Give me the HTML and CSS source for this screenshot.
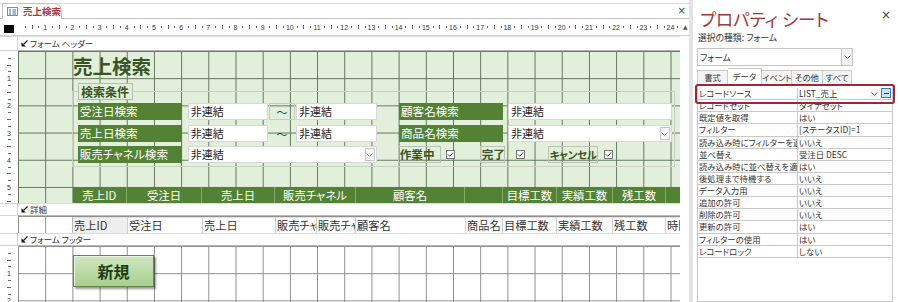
FILE: index.html
```html
<!DOCTYPE html>
<html lang="ja">
<head>
<meta charset="utf-8">
<title>売上検索</title>
<link rel="stylesheet" href="styles.css">
</head>
<body>
<div class="app">
  <div class="doc">
    <div class="tabstrip">
      <div class="tab">
        <svg class="tab-icon" width="11" height="9" viewBox="0 0 11 9"><rect x="0.5" y="0.5" width="10" height="8" fill="#fff" stroke="#8a8a8a"/><path d="M2 3h2M2 5h2M2 7h2M5.5 3h3.5M5.5 5h3.5M5.5 7h3.5" stroke="#3d70b8" stroke-width="1"/></svg>
        <span>売上検索</span>
      </div>
      <span class="doc-close">×</span>
    </div>

    <div class="ruler-row">
      <div class="corner"><i></i></div>
      <div class="hruler">
        <span><b>1</b></span><span><b>2</b></span><span><b>3</b></span><span><b>4</b></span><span><b>5</b></span><span><b>6</b></span><span><b>7</b></span><span><b>8</b></span><span><b>9</b></span><span><b>10</b></span><span><b>11</b></span><span><b>12</b></span><span><b>13</b></span><span><b>14</b></span><span><b>15</b></span><span><b>16</b></span><span><b>17</b></span><span><b>18</b></span><span><b>19</b></span><span><b>20</b></span><span><b>21</b></span><span><b>22</b></span><span><b>23</b></span><span><b>24</b></span><span class="rest"></span>
      </div>
      <div class="scroll-up">▲</div>
    </div>

    <!-- form header bar -->
    <div class="sec bar">
      <div class="vr selbox"></div>
      <div class="surf secbar"><svg width="7" height="7" viewBox="0 0 7 7"><path d="M0.5 6.5V2.2L4.8 6.5Z" fill="#111"/><path d="M2.6 4.4L6.5 0.5" stroke="#111" stroke-width="1.3"/></svg><span>フォーム ヘッダー</span></div>
    </div>

    <!-- form header -->
    <div class="sec header-sec">
      <div class="vr vcells">
        <span><b>1</b></span><span><b>2</b></span><span><b>3</b></span><span><b>4</b></span><span><b>5</b></span><span class="rest"></span>
      </div>
      <div class="surf grid-green header">
        <div class="form-title">売上検索</div>
        <div class="group">
          <div class="legend">検索条件</div>
          <div class="frow r1">
            <span class="lbl w104">受注日検索</span>
            <span class="tb w80 ml6">非連結</span>
            <span class="tilde boxed">〜</span>
            <span class="tb w81 ml1">非連結</span>
            <span class="lbl w104 ml22">顧客名検索</span>
            <span class="tb w164 ml5">非連結</span>
          </div>
          <div class="frow r2">
            <span class="lbl w104">売上日検索</span>
            <span class="tb w80 ml6">非連結</span>
            <span class="tilde">〜</span>
            <span class="tb w81 ml1">非連結</span>
            <span class="lbl w104 ml22">商品名検索</span>
            <span class="tb w164 ml5 combo-tb">非連結<i class="dd"><svg width="7" height="4" viewBox="0 0 7 4"><path d="M0.5 0.5L3.5 3.5L6.5 0.5" fill="none" stroke="#8a8a8a"/></svg></i></span>
          </div>
          <div class="frow r3">
            <span class="lbl w104">販売チャネル検索</span>
            <span class="tb w189 ml6 combo-tb">非連結<i class="dd"><svg width="7" height="4" viewBox="0 0 7 4"><path d="M0.5 0.5L3.5 3.5L6.5 0.5" fill="none" stroke="#8a8a8a"/></svg></i></span>
            <span class="plbl w43 ml21">作業中</span>
            <span class="cb ml5"><svg width="9" height="9" viewBox="0 0 9 9"><rect x="0.5" y="0.5" width="8" height="8" fill="#fff" stroke="#777"/><path d="M2 4.5L3.8 6.3L7 2.6" fill="none" stroke="#333" stroke-width="1"/></svg></span>
            <span class="plbl w25 ml25">完了</span>
            <span class="cb ml11"><svg width="9" height="9" viewBox="0 0 9 9"><rect x="0.5" y="0.5" width="8" height="8" fill="#fff" stroke="#777"/><path d="M2 4.5L3.8 6.3L7 2.6" fill="none" stroke="#333" stroke-width="1"/></svg></span>
            <span class="plbl w50 ml23 narrow">キャンセル</span>
            <span class="cb ml6"><svg width="9" height="9" viewBox="0 0 9 9"><rect x="0.5" y="0.5" width="8" height="8" fill="#fff" stroke="#777"/><path d="M2 4.5L3.8 6.3L7 2.6" fill="none" stroke="#333" stroke-width="1"/></svg></span>
          </div>
        </div>
        <div class="colband">
          <span class="c1">売上ID</span><span class="c2">受注日</span><span class="c3">売上日</span><span class="c4">販売チャネル</span><span class="c5">顧客名</span><span class="c6"></span><span class="c7">目標工数</span><span class="c8">実績工数</span><span class="c9">残工数</span><span class="c10"></span>
        </div>
      </div>
    </div>

    <!-- detail bar -->
    <div class="sec bar small">
      <div class="vr selbox"></div>
      <div class="surf secbar"><svg width="7" height="7" viewBox="0 0 7 7"><path d="M0.5 6.5V2.2L4.8 6.5Z" fill="#111"/><path d="M2.6 4.4L6.5 0.5" stroke="#111" stroke-width="1.3"/></svg><span>詳細</span></div>
    </div>

    <!-- detail -->
    <div class="sec detail-sec">
      <div class="vr vcells detail-vr"></div>
      <div class="surf grid-gray detail">
        <div class="drow">
          <span class="d1 first">売上ID</span><span class="d2">受注日</span><span class="d3">売上日</span><span class="d4">販売チャネル</span><span class="d5">販売チャネル</span><span class="d6">顧客名</span><span class="d7">商品名</span><span class="d8">目標工数</span><span class="d9">実績工数</span><span class="d10">残工数</span><span class="d11">時間</span>
        </div>
      </div>
    </div>

    <!-- footer bar -->
    <div class="sec bar small">
      <div class="vr selbox"></div>
      <div class="surf secbar"><svg width="7" height="7" viewBox="0 0 7 7"><path d="M0.5 6.5V2.2L4.8 6.5Z" fill="#111"/><path d="M2.6 4.4L6.5 0.5" stroke="#111" stroke-width="1.3"/></svg><span>フォーム フッター</span></div>
    </div>

    <!-- footer -->
    <div class="sec footer-sec">
      <div class="vr vcells">
        <span><b>1</b></span><span><b>2</b></span>
      </div>
      <div class="surf grid-gray footer">
        <div class="newbtn">新規</div>
      </div>
    </div>
  </div>

  <div class="splitter"></div>

  <div class="props">
    <div class="props-head">
      <span class="props-title">プロパティ シート</span>
      <span class="props-close">×</span>
    </div>
    <div class="sel-kind">選択の種類: フォーム</div>
    <div class="pcombo"><span>フォーム</span><i class="pdd"><svg width="7" height="4" viewBox="0 0 7 4"><path d="M0.5 0.5L3.5 3.5L6.5 0.5" fill="none" stroke="#777"/></svg></i></div>
    <div class="ptabs">
      <span class="t1">書式</span><span class="t2 on">データ</span><span class="t3">イベント</span><span class="t4">その他</span><span class="t5">すべて</span>
    </div>
    <div class="pgrid">
      <div class="prow"><span class="pk">レコードソース</span><span class="pv">LIST_売上<i class="vdd"><svg width="7" height="4" viewBox="0 0 7 4"><path d="M0.5 0.5L3.5 3.5L6.5 0.5" fill="none" stroke="#555"/></svg></i><i class="build"></i></span></div>
      <div class="prow"><span class="pk">レコードセット</span><span class="pv">ダイナセット</span></div>
      <div class="prow"><span class="pk">既定値を取得</span><span class="pv">はい</span></div>
      <div class="prow"><span class="pk">フィルター</span><span class="pv">[ステータスID]=1</span></div>
      <div class="prow"><span class="pk">読み込み時にフィルターを適用</span><span class="pv">いいえ</span></div>
      <div class="prow"><span class="pk">並べ替え</span><span class="pv">受注日 DESC</span></div>
      <div class="prow"><span class="pk">読み込み時に並べ替えを適用</span><span class="pv">はい</span></div>
      <div class="prow"><span class="pk">後処理まで待機する</span><span class="pv">いいえ</span></div>
      <div class="prow"><span class="pk">データ入力用</span><span class="pv">いいえ</span></div>
      <div class="prow"><span class="pk">追加の許可</span><span class="pv">いいえ</span></div>
      <div class="prow"><span class="pk">削除の許可</span><span class="pv">いいえ</span></div>
      <div class="prow"><span class="pk">更新の許可</span><span class="pv">はい</span></div>
      <div class="prow"><span class="pk">フィルターの使用</span><span class="pv">はい</span></div>
      <div class="prow"><span class="pk">レコードロック</span><span class="pv">しない</span></div>
      <div class="focus-ring"></div>
    </div>
  </div>
</div>
</body>
</html>
```

FILE: styles.css
```css
* { box-sizing: border-box; }
html, body { margin: 0; padding: 0; }
body {
  width: 900px;
  height: 302px;
  overflow: hidden;
  background: #fff;
  font-family: "Noto Sans CJK JP", "Noto Sans", sans-serif;
  font-feature-settings: "palt";
  color: #222;
}
.app { display: flex; height: 302px; }

/* ---------- document area ---------- */
.doc { width: 689px; flex: none; display: flex; flex-direction: column; overflow: hidden; }

.tabstrip {
  flex: none;
  height: 16px;
  margin-top: 3px;
  border-top: 1px solid #dadada;
  border-bottom: 1px solid #c6c6c6;
  display: flex;
  justify-content: space-between;
}
.tab {
  width: 60px;
  margin: -1px 0 -1px 2px;
  border: 1px solid #c4c4c4;
  border-bottom: none;
  border-top-right-radius: 8px;
  background: #fff;
  display: flex;
  align-items: center;
  gap: 5px;
  padding-left: 4px;
  font-size: 9.5px;
  font-weight: bold;
  color: #b8312f;
  line-height: 1;
}
.tab-icon { flex: none; }
.doc-close {
  font-family: "DejaVu Sans", sans-serif;
  font-size: 10px;
  color: #444;
  line-height: 14px;
  margin-right: 3px;
}

.ruler-row { flex: none; height: 17px; display: flex; border-bottom: 1px solid #d2d2d2; }
.corner { width: 18px; flex: none; display: flex; justify-content: center; padding-top: 6px; }
.corner i { display: block; width: 10px; height: 8px; background: #000; }
.hruler {
  width: 662px; flex: none; display: flex; overflow: hidden;
  font-family: "Liberation Sans", sans-serif; font-size: 7px; color: #333;
}
.hruler span {
  flex: none; width: 27.2px; height: 100%;
  display: flex; justify-content: flex-end; align-items: center;
  background-image: linear-gradient(#666, #666), linear-gradient(#666, #666), linear-gradient(#666, #666);
  background-repeat: no-repeat;
  background-size: 1px 2px, 1px 4px, 1px 2px;
  background-position: 6.8px 7px, 13.6px 6px, 20.4px 7px;
}
.hruler span.rest { width: 10px; }
.hruler b { font-weight: normal; transform: translateX(50%); }
.scroll-up {
  width: 9px; flex: none; font-size: 6px; color: #555; line-height: 1;
  padding: 5px 0 0 3px; font-family: "DejaVu Sans", sans-serif;
}

.sec { display: flex; flex: none; }
.vr { width: 18px; flex: none; }
.surf { width: 662px; flex: none; position: relative; }

.bar { height: 15px; }
.bar.small { height: 13px; }
.selbox { border: 1px solid #d4d4d4; border-left: none; background: #fff; }
.secbar {
  border-top: 1px solid #dcdcdc;
  border-bottom: 1px solid #b9b9b9;
  display: flex; align-items: center; gap: 2px;
  padding-left: 3px;
  font-size: 8.5px; color: #333; line-height: 1;
}

/* vertical ruler */
.vcells { display: flex; flex-direction: column; font-family: "Liberation Sans", sans-serif; font-size: 7px; color: #333; }
.vcells span {
  flex: none; height: 27.2px; width: 18px;
  display: flex; flex-direction: column; justify-content: flex-end; align-items: center;
  background-image: linear-gradient(#666, #666), linear-gradient(#666, #666), linear-gradient(#666, #666);
  background-repeat: no-repeat;
  background-size: 3px 1px, 4px 1px, 3px 1px;
  background-position: 8px 6.8px, 7px 13.6px, 8px 20.4px;
}
.vcells span.rest { flex: 1; }
.vcells b { font-weight: normal; transform: translateY(50%); }

/* grids */
.grid-green {
  background-color: #e2efda;
  background-image: linear-gradient(to right, #62765a 1px, transparent 1px), linear-gradient(to bottom, #62765a 1px, transparent 1px);
  background-size: 27.2px 27.2px;
}
.grid-gray {
  background-color: #fff;
  background-image: linear-gradient(to right, #8e8e8e 1px, transparent 1px), linear-gradient(to bottom, #8e8e8e 1px, transparent 1px);
  background-size: 27.2px 27.2px;
}

/* header section */
.header-sec { height: 152px; }
.header { display: flex; flex-direction: column; height: 152px; }
.form-title {
  margin: 3px 0 0 55px; height: 24px; line-height: 24px;
  font-size: 19.5px; font-weight: bold; color: #375623;
  font-feature-settings: normal;
}
.group {
  margin: 13px 0 0 54px;
  width: 603px; height: 76px;
  border: 1px solid #c9d0c4;
}
.legend {
  margin: -9px 0 0 5px;
  width: 55px; height: 17px;
  border: 1px solid #b3bcad;
  background: #e2efda;
  color: #375623; font-weight: bold; font-size: 12px; line-height: 15px;
  padding-left: 2px;
  font-feature-settings: normal;
}
.frow { display: flex; align-items: center; height: 17px; margin-left: 4.7px; }
.r1 { margin-top: 3px; }
.r2 { margin-top: 5px; }
.r3 { margin-top: 4px; }
.lbl {
  height: 17px; line-height: 17px; padding-left: 2px;
  background: #548235; color: #fff; font-size: 11.6px;
  white-space: nowrap; overflow: hidden;
}
.tb {
  position: relative;
  height: 17px; line-height: 15px; padding-left: 2px;
  background: #fff; border: 1px solid #d8d8d8;
  font-size: 11px; color: #222; white-space: nowrap;
}
.dd {
  position: absolute; right: 1px; top: 1px;
  width: 10px; height: 13px;
  background: #f4f4f4; border: 1px solid #c6c6c6;
  display: flex; align-items: center; justify-content: center;
}
.tilde {
  width: 26px; height: 17px; margin-left: 1.3px;
  display: flex; align-items: center; justify-content: center;
  font-size: 11px; color: #333;
}
.tilde.boxed { border: 1px solid #c5ccc0; }
.plbl {
  height: 17px; line-height: 15px; padding-left: 1px;
  border: 1px solid #bac3b4;
  color: #375623; font-weight: bold; font-size: 11.6px; white-space: nowrap; overflow: hidden;
}
.plbl.narrow { font-size: 10.6px; letter-spacing: -0.4px; }
.cb { width: 9px; height: 9px; display: flex; flex: none; }
.w25 { width: 25px; flex: none; }
.w43 { width: 43px; flex: none; }
.w50 { width: 50px; flex: none; }
.w80 { width: 80px; flex: none; }
.w81 { width: 81px; flex: none; }
.w104 { width: 104px; flex: none; }
.w164 { width: 164px; flex: none; }
.w189 { width: 189px; flex: none; }
.ml1 { margin-left: 1px; }
.ml5 { margin-left: 5px; }
.ml6 { margin-left: 6px; }
.ml11 { margin-left: 11px; }
.ml21 { margin-left: 21px; }
.ml22 { margin-left: 22px; }
.ml23 { margin-left: 23px; }
.ml25 { margin-left: 25px; }

.colband {
  margin: auto 0 0 54.7px;
  height: 16px;
  display: flex;
  background: #548235;
  color: #fff; font-size: 11.4px; line-height: 16px;
}
.colband span { flex: none; text-align: center; border-left: 1px solid #86a970; white-space: nowrap; overflow: hidden; }
.colband .c1 { width: 53.3px; border-left: none; }
.colband .c2 { width: 75px; }
.colband .c3 { width: 73px; }
.colband .c4 { width: 81px; }
.colband .c5 { width: 109px; }
.colband .c6 { width: 38px; }
.colband .c7 { width: 54px; }
.colband .c8 { width: 56px; }
.colband .c9 { width: 53px; }
.colband .c10 { width: 15px; }

/* detail */
.detail-sec { height: 17px; }
.detail { height: 17px; padding-top: 1px; }
.drow { display: flex; margin-left: 55px; height: 16px; overflow: hidden; }
.drow span {
  flex: none; height: 16px; line-height: 15px;
  background: #fff; border-left: 1px solid #d0d0d0; border-top: 1px solid #e0e0e0;
  font-size: 11.2px; color: #333; padding-left: 1px;
  white-space: nowrap; overflow: hidden;
}
.drow .first { background: #eeeeee; border-left: none; }
.d1 { width: 54px; }
.d2 { width: 75px; }
.d3 { width: 73px; }
.d4 { width: 41px; }
.d5 { width: 39px; }
.d6 { width: 110px; }
.d7 { width: 37px; }
.d8 { width: 54px; }
.d9 { width: 56px; }
.d10 { width: 53px; }
.d11 { width: 15px; }

/* footer */
.footer-sec { flex: 1; }
.footer { height: 60px; }
.newbtn {
  margin: 9px 0 0 55px;
  width: 81px; height: 32px;
  background: linear-gradient(#cfe6bf, #a9d08e);
  border: 1px solid #5f8a45;
  box-shadow: inset 1px 1px 0 #e9f4e1, 2px 2px 2px rgba(0, 0, 0, 0.4);
  display: flex; align-items: center; justify-content: center;
  font-size: 16px; font-weight: bold; color: #203d12;
}

/* ---------- splitter ---------- */
.splitter { width: 4px; flex: none; background: #e4e4e4; }

/* ---------- property sheet ---------- */
.props {
  width: 207px; flex: none;
  padding-left: 4px;
  display: flex; flex-direction: column;
  font-size: 8.4px; color: #333;
}
.props-head { display: flex; justify-content: space-between; align-items: center; height: 24px; margin-top: 7px; }
.props-title { font-size: 17.5px; color: #a4373a; margin-left: 3px; line-height: 24px; }
.props-close { font-family: "DejaVu Sans", sans-serif; font-size: 12px; color: #444; margin-right: 9px; margin-top: -8px; }
.sel-kind { margin-left: 1px; height: 12px; line-height: 12px; margin-top: 1px; font-size: 8.8px; }
.pcombo {
  margin-top: 4px; width: 156px; height: 18px;
  border: 1px solid #c4c4c4; display: flex; align-items: center; justify-content: space-between;
  padding-left: 2px; font-size: 8.8px;
}
.pdd { width: 11px; height: 16px; border-left: 1px solid #c8c8c8; background: #f3f3f3; display: flex; align-items: center; justify-content: center; }
.ptabs { margin-top: 3px; height: 15px; display: flex; align-items: flex-end; }
.ptabs span {
  flex: none; height: 14px; line-height: 13px; text-align: center;
  border: 1px solid #cbcbcb; border-left: none; border-bottom: none;
  background: #f4f4f4; white-space: nowrap; overflow: hidden;
}
.ptabs .t1 { width: 31px; border-left: 1px solid #cbcbcb; }
.ptabs .t2 { width: 34px; }
.ptabs .t3 { width: 30px; }
.ptabs .t4 { width: 31px; }
.ptabs .t5 { width: 29px; }
.ptabs .on { height: 16px; background: #fff; line-height: 15px; }

.pgrid {
  position: relative;
  margin-top: 1px;
  width: 196px; flex: 1;
  border: 1px solid #c8c8c8;
  padding-top: 2px;
}
.prow { display: flex; height: 12.13px; border-bottom: 1px solid #c9c9c9; }
.pk { width: 100px; flex: none; border-right: 1px solid #c9c9c9; padding-left: 1px; white-space: nowrap; overflow: hidden; line-height: 11px; }
.pv { flex: 1; padding-left: 1px; white-space: nowrap; overflow: hidden; line-height: 11px; display: flex; align-items: center; position: relative; }
.vdd {
  position: absolute; right: 13px; top: 1px; width: 9px; height: 9px;
  display: flex; align-items: center; justify-content: center; background: #f4f4f4;
}
.build {
  position: absolute; right: 1px; top: 0; width: 10px; height: 10px;
  background: #cce4f7; border: 1px solid #3c7fb1;
  background-image: linear-gradient(#1e3f66, #1e3f66);
  background-size: 5px 1px; background-position: center; background-repeat: no-repeat;
}
.focus-ring {
  position: absolute; left: -3px; top: -2px; width: 200px; height: 20px;
  border: 2px solid #9d2638; border-radius: 3px;
}
```
